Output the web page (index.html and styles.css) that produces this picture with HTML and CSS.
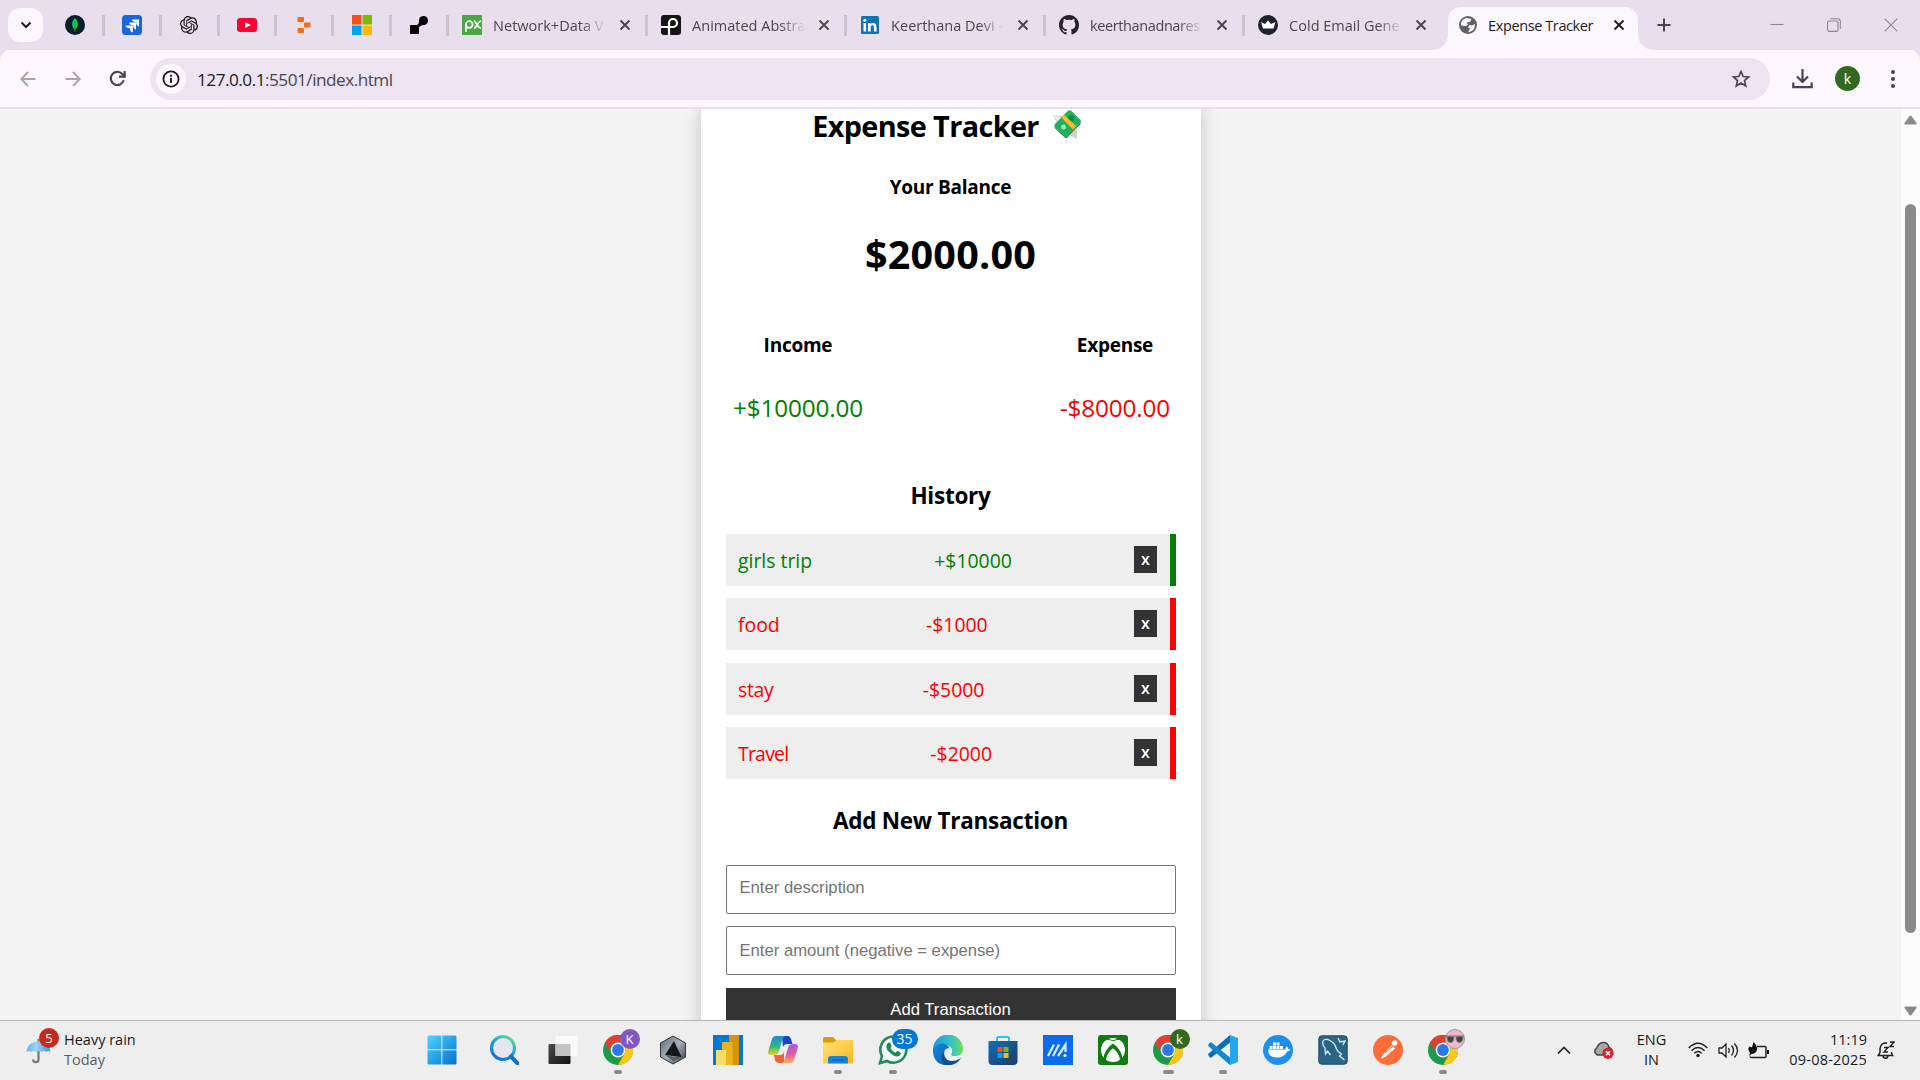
FILE: index.html
```html
<!DOCTYPE html>
<html lang="en">
<head>
<meta charset="utf-8">
<title>Expense Tracker</title>
<link rel="stylesheet" href="styles.css">
</head>
<body>
<svg class="defs" width="0" height="0" aria-hidden="true">
  <defs>
    <linearGradient id="win" x1="0" y1="0" x2="1" y2="1"><stop offset="0" stop-color="#50d6ff"/><stop offset="1" stop-color="#0070d0"/></linearGradient>
    <linearGradient id="lens" x1="0.8" y1="0" x2="0.2" y2="1"><stop offset="0" stop-color="#5fe08a"/><stop offset=".45" stop-color="#19a0d8"/><stop offset="1" stop-color="#0a6fd0"/></linearGradient>
    <linearGradient id="dark" x1="0" y1="0" x2="1" y2="1"><stop offset="0" stop-color="#4a4a48"/><stop offset="1" stop-color="#111"/></linearGradient>
    <linearGradient id="steel" x1="0" y1="0" x2="1" y2="1"><stop offset="0" stop-color="#5a6470"/><stop offset=".5" stop-color="#a9b3bd"/><stop offset="1" stop-color="#30363c"/></linearGradient>
    <linearGradient id="copA" x1="0" y1="0" x2="0" y2="1"><stop offset="0" stop-color="#1a8be0"/><stop offset=".55" stop-color="#2fb87c"/><stop offset="1" stop-color="#f2d21a"/></linearGradient>
    <linearGradient id="copB" x1="0" y1="0" x2="0" y2="1"><stop offset="0" stop-color="#a05be8"/><stop offset=".55" stop-color="#ea5b9c"/><stop offset="1" stop-color="#ffb05c"/></linearGradient>
    <linearGradient id="fold" x1="0" y1="0" x2="1" y2="1"><stop offset="0" stop-color="#ffe27a"/><stop offset="1" stop-color="#fcb81f"/></linearGradient>
    <linearGradient id="edgeA" x1="0" y1="0" x2="1" y2="0"><stop offset="0" stop-color="#1f98dc"/><stop offset=".6" stop-color="#35c1c8"/><stop offset="1" stop-color="#6ae24a"/></linearGradient>
    <linearGradient id="edgeB" x1="0" y1="0" x2="1" y2="1"><stop offset="0" stop-color="#1287dc"/><stop offset="1" stop-color="#0c57a6"/></linearGradient>
    <linearGradient id="store" x1="0" y1="0" x2="1" y2="1"><stop offset="0" stop-color="#0f6fb8"/><stop offset="1" stop-color="#203a66"/></linearGradient>
    <linearGradient id="umb" x1="0" y1="0" x2="1" y2="0"><stop offset="0" stop-color="#62b4f5"/><stop offset=".4" stop-color="#9fd3fb"/><stop offset="1" stop-color="#3c93ec"/></linearGradient>
    <symbol id="x" viewBox="0 0 12 12"><path d="M1.500 1.500l9 9M10.500 1.500l-9 9" stroke="currentColor" stroke-width="1.900" fill="none"/></symbol>
    <symbol id="chrome" viewBox="0 0 30 30">
      <circle cx="15" cy="15" r="15" fill="#1e9a48"/>
      <path d="M2 7.500A15 15 0 0 1 28 7.500H15A7.500 7.500 0 0 0 8.500 18.800z" fill="#e53d31"/>
      <path d="M28 7.500A15 15 0 0 1 15 30L21.500 18.700A7.500 7.500 0 0 0 15 7.500z" fill="#fdc713"/>
      <circle cx="15" cy="15" r="7.400" fill="#fff"/><circle cx="15" cy="15" r="5.900" fill="#2d77ee"/>
    </symbol>
  </defs>
</svg>

<header class="tabstrip">
  <div class="tab-search"><svg width="12" height="8" viewBox="0 0 12 8"><path d="M1.500 1.500L6 6l4.500-4.500" fill="none" stroke="#1d1b20" stroke-width="2"/></svg></div>

  <div class="pin"><svg width="20" height="20" viewBox="0 0 20 20"><circle cx="10" cy="10" r="10" fill="#041e2b"/><path d="M10 3C6.500 7 6 11 10 15C14 11 13.500 7 10 3z" fill="#13d65a"/><path d="M10 6v11" stroke="#0a8a3c" stroke-width="1"/></svg></div>
  <div class="pin"><svg width="20" height="20" viewBox="0 0 20 20"><rect width="20" height="20" rx="3.500" fill="#1868db"/><path d="M10 4.500h7v7q-2.800-.5-2.800-4.200-3.700 0-4.200-2.800zM7 7.500q3.500 0 7 0v7q-2.800-.5-2.800-4.200Q7.500 10.300 7 7.500zM3.500 10.500h7.300v7q-2.800-.5-2.800-4.200-4 0-4.500-2.800z" fill="#fff"/></svg></div>
  <div class="pin"><svg width="18" height="18" viewBox="0 0 24 24"><path fill="#111" d="M22.282 9.821a5.985 5.985 0 0 0-.516-4.910 6.046 6.046 0 0 0-6.510-2.900A6.065 6.065 0 0 0 4.981 4.180a5.985 5.985 0 0 0-3.998 2.900 6.046 6.046 0 0 0 .743 7.097 5.980 5.980 0 0 0 .511 4.911 6.051 6.051 0 0 0 6.515 2.900A5.985 5.985 0 0 0 13.260 24a6.056 6.056 0 0 0 5.772-4.206 5.990 5.990 0 0 0 3.998-2.900 6.056 6.056 0 0 0-.747-7.073zM13.260 22.430a4.476 4.476 0 0 1-2.876-1.041l.142-.080 4.778-2.758a.795.795 0 0 0 .393-.681v-6.737l2.020 1.169a.071.071 0 0 1 .038.052v5.583a4.504 4.504 0 0 1-4.495 4.494zM3.600 18.304a4.470 4.470 0 0 1-.535-3.014l.142.085 4.783 2.759a.771.771 0 0 0 .780 0l5.843-3.369v2.332a.080.080 0 0 1-.033.062L9.740 19.950a4.500 4.500 0 0 1-6.140-1.646zM2.340 7.896a4.485 4.485 0 0 1 2.366-1.973V11.600a.766.766 0 0 0 .388.677l5.815 3.355-2.020 1.168a.076.076 0 0 1-.071 0l-4.830-2.787A4.504 4.504 0 0 1 2.340 7.872zm16.597 3.855l-5.833-3.387L15.119 7.200a.076.076 0 0 1 .071 0l4.830 2.791a4.494 4.494 0 0 1-.676 8.105v-5.678a.790.790 0 0 0-.407-.667zm2.010-3.023l-.141-.085-4.774-2.782a.776.776 0 0 0-.785 0L9.409 9.230V6.897a.066.066 0 0 1 .028-.061l4.830-2.787a4.500 4.500 0 0 1 6.680 4.660zm-12.640 4.135l-2.020-1.164a.080.080 0 0 1-.038-.057V6.075a4.500 4.500 0 0 1 7.375-3.453l-.142.080L8.704 5.460a.795.795 0 0 0-.393.681zm1.097-2.365l2.602-1.500 2.607 1.500v2.999l-2.597 1.500-2.607-1.500z"/></svg></div>
  <div class="pin"><svg width="20" height="14" viewBox="0 0 20 14"><rect width="20" height="14" rx="3" fill="#ff0033"/><path d="M8 4l6 3-6 3z" fill="#fff"/></svg></div>
  <div class="pin"><svg width="14" height="16" viewBox="0 0 14 16"><g fill="#f76b15"><rect x="0.500" y="0" width="6.500" height="5" rx="1"/><rect x="7" y="5.500" width="6.500" height="5" rx="1"/><rect x="0.500" y="11" width="6.500" height="5" rx="1"/></g></svg></div>
  <div class="pin"><svg width="20" height="20" viewBox="0 0 20 20"><path d="M0 0h9.500v9.500H0z" fill="#f25022"/><path d="M10.500 0H20v9.500h-9.500z" fill="#7fba00"/><path d="M0 10.500h9.500V20H0z" fill="#00a4ef"/><path d="M10.500 10.500H20V20h-9.500z" fill="#ffb900"/></svg></div>
  <div class="pin"><svg width="18" height="18" viewBox="0 0 18 18"><path d="M0 9h9v9H0z"/><circle cx="13.500" cy="4.500" r="4.500"/><path d="M4 10C9 9 9 7 9.500 3L15 9c-4 0-5.500 1-7 4z"/></svg></div>

  <div class="tab"><svg width="20" height="20" viewBox="0 0 20 20"><path d="M0 0h20v20H0z" fill="#4ba847"/><g fill="none" stroke="#fff" stroke-width="1.700"><path d="M4 17V9.500"/><circle cx="7.300" cy="9.500" r="3.300"/><path d="M12 6c2 0 3 7 7 7M19 6c-3 0-4 7-7 7"/></g></svg><span class="title t1">Network+Data V</span><svg class="close"><use href="#x"/></svg></div>
  <div class="tab"><svg width="20" height="20" viewBox="0 0 20 20"><rect width="20" height="20" rx="3" fill="#151515"/><path d="M0 12h12a4 4 0 1 0-4-4v12" fill="none" stroke="#fff" stroke-width="2.200"/></svg><span class="title t2">Animated Abstra</span><svg class="close"><use href="#x"/></svg></div>
  <div class="tab"><svg width="20" height="18" viewBox="0 0 20 18"><rect x="1" width="18" height="18" rx="1.500" fill="#0a76b7"/><path d="M3.500 7h2.600v8.500H3.500zM8 7h2.500v1.200c1-2 6-2 6 2.300v5h-2.600v-4.600c0-2.300-3.200-2-3.200 0v4.600H8z" fill="#fff"/><circle cx="4.800" cy="4.200" r="1.500" fill="#fff"/></svg><span class="title t3">Keerthana Devi -</span><svg class="close"><use href="#x"/></svg></div>
  <div class="tab"><svg width="20" height="20" viewBox="0 0 16 16"><path fill="#24222c" d="M8 0C3.580 0 0 3.580 0 8c0 3.540 2.290 6.530 5.470 7.590.4.070.550-.170.550-.380 0-.190-.010-.820-.010-1.490-2.010.370-2.530-.490-2.690-.940-.090-.230-.480-.940-.820-1.130-.280-.150-.680-.520-.010-.530.630-.010 1.080.580 1.230.820.720 1.210 1.870.870 2.330.660.070-.520.280-.870.510-1.070-1.780-.2-3.640-.890-3.640-3.950 0-.870.310-1.590.820-2.150-.080-.2-.360-1.020.080-2.120 0 0 .670-.210 2.200.820.640-.180 1.320-.270 2-.270s1.360.090 2 .270c1.530-1.040 2.200-.820 2.200-.820.440 1.100.160 1.920.080 2.120.510.560.820 1.270.820 2.150 0 3.070-1.870 3.750-3.650 3.950.290.250.540.730.540 1.480 0 1.070-.010 1.930-.010 2.200 0 .210.150.460.550.380A8.010 8.010 0 0 0 16 8c0-4.420-3.580-8-8-8z"/></svg><span class="title t4">keerthanadnares</span><svg class="close"><use href="#x"/></svg></div>
  <div class="tab last"><svg width="20" height="20" viewBox="0 0 20 20"><circle cx="10" cy="10" r="10" fill="#22222c"/><path d="M3 7l4 2 3-3.500L13 9l4.500-2-2 6.500H5z" fill="#fff"/></svg><span class="title t5">Cold Email Gene</span><svg class="close"><use href="#x"/></svg></div>
  <div class="tab active"><svg width="18" height="18" viewBox="0 0 18 18"><circle cx="9" cy="9" r="9" fill="#5f6368"/><path d="M8 2C3.500 2.500 1.500 6 2 9.500l5 .5 2-1.500-1.500-2L11 6l1.500-3zM16 8l-3 1.500L10.500 9 9 11.500l2 1-2 3.700C13 16 16.300 13 16 8z" fill="#fdf7ff"/></svg><span class="title t6">Expense Tracker</span><svg class="close"><use href="#x"/></svg></div>
  <svg class="newtab" width="14" height="14" viewBox="0 0 14 14"><path d="M7 0.500v13M.5 7h13" stroke="#49454f" stroke-width="2"/></svg>
  <div class="win-controls">
    <svg width="14" height="14" viewBox="0 0 14 14"><path d="M.5 6.500h13"/></svg>
    <svg width="14" height="14" viewBox="0 0 14 14"><rect x=".6" y="3" width="10.400" height="10.400" rx="1.500"/><path d="M3.500.8H11A2.500 2.500 0 0 1 13.300 3.200V11"/></svg>
    <svg width="14" height="14" viewBox="0 0 14 14"><path d="M.7.7l12.600 12.600M13.300.7L.7 13.300"/></svg>
  </div>
</header>

<div class="toolbar">
  <svg class="nav dim" width="16" height="16" viewBox="0 0 16 16"><path d="M15.500 8H1.500M8 1L1.300 8 8 15"/></svg>
  <svg class="nav dim" width="16" height="16" viewBox="0 0 16 16"><path d="M.5 8h14M8 1l6.700 7L8 15"/></svg>
  <svg class="nav reload" width="17" height="17" viewBox="0 0 17 17"><path d="M14.700 10.200A6.600 6.600 0 1 1 13.300 4L15.500 6.200M15.700 1v5.700H10"/></svg>
  <div class="omnibox">
    <div class="site-info"><svg width="18" height="18" viewBox="0 0 18 18"><circle cx="9" cy="9" r="7.600" fill="none" stroke="#1d1b20" stroke-width="1.800"/><path d="M9 8v5M9 4.800v1.900" stroke="#1d1b20" stroke-width="1.900"/></svg></div>
    <span class="url"><b>127.0.0.1</b>:5501/index.html</span>
    <svg class="star" width="20" height="20" viewBox="0 0 20 20"><path d="M10 2.500l2.200 5 5.400.5-4.100 3.600 1.200 5.300L10 14.100l-4.700 2.800 1.200-5.300L2.400 8l5.400-.5z" fill="none" stroke="#49454f" stroke-width="1.700"/></svg>
  </div>
  <svg class="dl" width="21" height="21" viewBox="0 0 21 21"><path d="M10.500 1v12.500M5 8.500l5.500 5.500L16 8.500M1.300 14.500v4.700h18.400v-4.700" fill="none" stroke="#49405a" stroke-width="2.200"/></svg>
  <div class="avatar">k</div>
  <svg class="dots" width="6" height="20" viewBox="0 0 6 20"><g fill="#49405a"><circle cx="3" cy="3" r="2"/><circle cx="3" cy="10" r="2"/><circle cx="3" cy="17" r="2"/></g></svg>
</div>

<main class="viewport">
  <div class="page">
    <section class="card">
      <h2><span>Expense Tracker</span>
        <svg class="money" width="28" height="29" viewBox="0 0 28 29"><path d="M0 5l10 1-5 9zM16 23l8-9-.5 15z" fill="#d0d0d0"/><path d="M0 5l9 3-4 4z" fill="#ececec"/><path d="M1.500 14.500L15 .8q2-1.300 3.500.2L27 9.500q1.500 1.700 0 3.200L14.500 26q-1.500 1.300-3 0L1.500 16.500z" fill="#1fb25a"/><path d="M1.500 16.500l10 9.500q1.500 1.300 3 0L27 12.700l.8-1-.3 2.300L14.500 27.300q-1.500 1.200-3 0L1.700 18z" fill="#0d7a3a"/><path d="M17 25l7-8-.5 12z" fill="#d0d0d0"/><circle cx="18" cy="8.500" r="3.200" fill="#128a44"/><circle cx="10.500" cy="17" r="2.500" fill="#9be6b6"/><path d="M8.300 7.500L11 4.800 23 16l-3 3.500z" fill="#fcb928"/></svg>
      </h2>
      <h4 class="balance-label"><span>Your Balance</span></h4>
      <h1><span>$2000.00</span></h1>
      <div class="summary">
        <div class="sum"><h4><span>Income</span></h4><p class="plus"><span>+$10000.00</span></p></div>
        <div class="sum"><h4><span>Expense</span></h4><p class="minus"><span>-$8000.00</span></p></div>
      </div>
      <h3 class="history"><span>History</span></h3>
      <ul class="list">
        <li class="plus"><span>girls trip</span><span>+$10000</span><button>x</button></li>
        <li class="minus"><span>food</span><span>-$1000</span><button>x</button></li>
        <li class="minus"><span class="snug">stay</span><span>-$5000</span><button>x</button></li>
        <li class="minus"><span class="tight">Travel</span><span>-$2000</span><button>x</button></li>
      </ul>
      <h3 class="add"><span>Add New Transaction</span></h3>
      <form class="form">
        <input type="text" class="desc" placeholder="Enter description">
        <input type="text" placeholder="Enter amount (negative = expense)">
        <button type="button" class="submit">Add Transaction</button>
      </form>
    </section>
  </div>
  <div class="scrollbar">
    <svg width="13" height="10" viewBox="0 0 13 10"><path d="M5.500 1q1-1.200 2 0l5 7q.5 1.500-1 1.500h-10Q0 9.500.5 8z"/></svg>
    <div class="thumb"></div>
    <svg width="13" height="10" viewBox="0 0 13 10"><path d="M5.500 9q1 1.200 2 0l5-7q.5-1.500-1-1.500h-10Q0 .5.500 2z"/></svg>
  </div>
</main>

<footer class="taskbar">
  <div class="weather">
    <div class="umbrella">
      <svg width="25" height="26" viewBox="0 0 25 26"><path d="M12.500 1v3" stroke="#777" stroke-width="2"/><path d="M12.500 12v9.500a2.700 2.700 0 0 1-5.400 0" fill="none" stroke="#777" stroke-width="2.200"/><path d="M.5 14C1 7 6 3.500 12.500 3.500S24 7 24.500 14q-2-2-4 0-2.500-2-5 0-3-2-5.500 0-2.500-2-5 0-2.500-1.500-4.500 0z" fill="url(#umb)"/></svg>
      <span class="count">5</span>
    </div>
    <div class="wtext"><div class="wl1">Heavy rain</div><div class="wl2">Today</div></div>
  </div>
  <div class="apps">
    <div class="app s1"><svg width="30" height="30" viewBox="0 0 30 30"><path d="M.5 2Q.5 .5 2 .5h12.300v13.800H.5zM15.300.5H28q1.500 0 1.500 1.500v12.300H15.300zM.5 15.300h13.800v14.200H2q-1.500 0-1.500-1.500zM15.300 15.300h14.200V28q0 1.500-1.500 1.500H15.300z" fill="url(#win)"/></svg></div>
    <div class="app s2"><svg width="30" height="30" viewBox="0 0 30 30"><circle cx="14" cy="13" r="11.500" fill="#e3e6ea" stroke="url(#lens)" stroke-width="3"/><path d="M22 21.500l6.500 6.800" stroke="#0a6fd0" stroke-width="4" stroke-linecap="round"/></svg></div>
    <div class="app s3"><svg width="30" height="30" viewBox="0 0 30 30"><rect x=".5" y="9" width="22" height="20" rx="1" fill="url(#dark)"/><rect x="7.500" y="1" width="22" height="20" rx="1" fill="#fafafa"/><path d="M7.500 9h15v12h-15z" fill="#c2c2c2"/></svg></div>
    <div class="app run"><svg width="30" height="30"><use href="#chrome"/></svg><span class="badge purple">K</span></div>
    <div class="app"><svg width="30" height="30" viewBox="0 0 30 30"><path d="M15 1l12.500 7v14L15 29 2.500 22V8z" fill="url(#steel)" stroke="#30353a"/><path d="M16 6l7.500 16L7 20z" fill="#14171a"/><path d="M7 20l9 2 7.500 0L15 26z" fill="#555d66"/></svg></div>
    <div class="app"><svg width="30" height="30" viewBox="0 0 30 30"><path d="M0 0h30v30H0z" fill="#0078d4"/><path d="M16 0h10v30H16z" fill="#d6930e"/><path d="M9 7h10.500v23H9z" fill="#ecb41c"/><path d="M3 15h10v15H3z" fill="#f8dc6a"/></svg></div>
    <div class="app"><svg width="30" height="30" viewBox="0 0 30 30"><path d="M14 1h6q2 0 3 3l1.500 5H19q-3 0-4 3z" fill="#1a44c8"/><path d="M16 28h-6q-2 0-3-3l-1-5h6q3 0 4-3z" fill="#f0643c"/><path d="M8 1h9q-2 1-3 5l-3 10q-1 4-5 4H3q-4 0-2.500-5L4 4q1-3 4-3z" fill="url(#copA)"/><path d="M22 28h-8q2-1 3-5l3-10q1-4 5-4h2q4 0 2.500 5L26 25q-1 3-4 3z" fill="url(#copB)"/></svg></div>
    <div class="app run"><svg width="30" height="30" viewBox="0 0 30 30"><path d="M0 3.500Q0 2 1.500 2H10l3 3h15.500Q30 5 30 6.500V12H0z" fill="#d99b08"/><path d="M0 7.500h10.500L13.500 5h15Q30 5 30 6.500v21q0 1-1 1H1q-1 0-1-1z" fill="url(#fold)"/><path d="M5 28.500V24q0-3 3-3h14q3 0 3 3v4.500z" fill="#1784d8"/><path d="M9 25h12" stroke="#0b5a9c"/></svg></div>
    <div class="app run"><svg width="30" height="30" viewBox="0 0 30 30"><path d="M2 28l2-7A13 13 0 1 1 9 26z" fill="#f5f8f6" stroke="#1f8b5c" stroke-width="2.600"/><path d="M9.500 8.500q2-2 3 0l1 2.500q.3.800-1 2 1.500 3.500 5 4.700 1.500-2.200 2.300-1.700l2.700 1.500q1.200 1-.8 3-3 2.500-8-1.200-6.500-5-5.200-9z" fill="#1f8b5c"/></svg><span class="badge wide">35</span></div>
    <div class="app"><svg width="30" height="30" viewBox="0 0 30 30"><path d="M0 15A15 15 0 0 1 30 14c0 5-4 7-8.500 7-3 0-4-1.500-2.500-3.500C20 14 17 10 12 10 6 10 1 14 0 18z" fill="url(#edgeA)"/><path d="M0 16c1-6 7-8.500 12-7 3 1 4 3 4.500 4.500C10 12 9 22 16 26q5 3 11-2C21 34 0 33 0 16z" fill="url(#edgeB)"/><path d="M11 16c-2 5 2 10 8 10 4 0 7-2 9-3-3 5-8 7-13 7C7 29 7 20 11 16z" fill="#134f98"/></svg></div>
    <div class="app"><svg width="30" height="30" viewBox="0 0 30 30"><path d="M9 7V3.500Q9 2 10.500 2h9Q21 2 21 3.500V7" fill="none" stroke="#35c0f2" stroke-width="2"/><path d="M.5 6h29v20q0 4-4 4h-21q-4 0-4-4z" fill="url(#store)"/><path d="M9.500 12h5v5h-5z" fill="#f25022"/><path d="M15.500 12h5v5h-5z" fill="#7fba00"/><path d="M9.500 18h5v5h-5z" fill="#00a4ef"/><path d="M15.500 18h5v5h-5z" fill="#ffb900"/></svg></div>
    <div class="app"><svg width="30" height="30" viewBox="0 0 30 30"><path d="M0 0h30v30H0z" fill="#0a6ce8"/><g fill="none" stroke="#d5e7ff" stroke-width="2.300"><path d="M5 21L11 9.500M10 21l6-11.500M15 21L22.500 9.500V17"/></g><circle cx="22" cy="20.500" r="1.500" fill="#fff"/></svg></div>
    <div class="app"><svg width="30" height="30" viewBox="0 0 30 30"><rect width="30" height="30" rx="3" fill="#107c10"/><circle cx="15" cy="15" r="12" fill="#fff"/><path d="M15 8.500c4.500 3 9.500 9.500 9.300 15L22 25C21.500 20 18 15.500 15 13.300 12 15.500 8.500 20 8 25l-2.300-1.500C5.500 18 10.500 11.500 15 8.500zM7.500 5Q11 4 15 6.300 19 4 22.500 5L21 3.500Q18 4 15 5.300 12 4 9 3.500z" fill="#107c10"/></svg></div>
    <div class="app run wide-run"><svg width="30" height="30"><use href="#chrome"/></svg><span class="badge green">k</span></div>
    <div class="app run"><svg width="30" height="30" viewBox="0 0 30 30"><path d="M22 0l8 3v24l-8 3z" fill="#25a6ee"/><path d="M22 7.500L3.500 22.500Q2.500 23 1.500 22L.5 20.500q-.8-1 .2-2L22 0z" fill="#0a6fb8"/><path d="M22 22.500L3.500 7.500Q2.500 7 1.500 8L.5 9.500q-.8 1 .2 2L22 30z" fill="#1287d0"/></svg></div>
    <div class="app"><svg width="30" height="30" viewBox="0 0 30 30"><circle cx="15" cy="15" r="15" fill="#1d8ff0"/><path d="M5 14.500h17.500q0-2.500 1-3.500 1.500 1 1.500 3 1.500-.3 2.500.3-1 2.200-3.500 2.200-2.500 6-10 6-9 0-9-8z" fill="#fff"/><g fill="#fff"><path d="M6.500 11h3v3h-3zM10 11h3v3h-3zM13.500 11h3v3h-3zM17 11h3v3h-3zM10 7.500h3v3h-3zM13.500 7.500h3v3h-3z"/></g></svg></div>
    <div class="app"><svg width="30" height="30" viewBox="0 0 30 30"><rect x=".8" y=".8" width="28.400" height="28.400" rx="3" fill="#2a6587" stroke="#1c4a66"/><path d="M5 6q2-3 7-.5 5 2.500 6.500 8.500 1 3 5 5l-2 2 5 4M5 6q-1 4 2 7l.5 6 2-3 3 4M20 3l2 4 5-1-2 4" fill="none" stroke="#dcecf5" stroke-width="1.300"/></svg></div>
    <div class="app"><svg width="30" height="30" viewBox="0 0 30 30"><circle cx="15" cy="15" r="15" fill="#ff6c37"/><circle cx="21.500" cy="8" r="2.800" fill="#fff"/><path d="M19 10l3 3.500-9 8-5.500 2.500 3-5z" fill="#fff"/><path d="M12 18l8-7" stroke="#ff6c37"/></svg></div>
    <div class="app run"><svg width="30" height="30"><use href="#chrome"/></svg><span class="badge pink"><svg width="18" height="10" viewBox="0 0 18 10"><path d="M0 1h18M1 1.500h7q0 6-3.500 6T1 1.500zM10 1.500h7q0 6-3.500 6t-3.500-6z" fill="#444" stroke="#777"/></svg></span></div>
  </div>
  <div class="tray">
    <svg class="chev" width="14" height="9" viewBox="0 0 14 9"><path d="M1 7.500l6-6 6 6" fill="none" stroke="#222" stroke-width="1.700"/></svg>
    <svg class="cloud" width="21" height="18" viewBox="0 0 21 18"><path d="M4.500 14a4 4 0 0 1-.8-7.200Q6 1.500 10.500 1.500T16 6.500q3 1 3 4t-4 3.500z" fill="#a8a8a8" stroke="#444" stroke-width="1.500"/><circle cx="15" cy="12.300" r="5.700" fill="#d9242f"/><path d="M13 10.300l4 4M17 10.300l-4 4" stroke="#fff" stroke-width="1.500"/></svg>
    <div class="lang"><span>ENG</span><span>IN</span></div>
    <svg class="wifi" width="20" height="16" viewBox="0 0 20 16"><g fill="none" stroke="#222" stroke-width="1.400"><path d="M.7 6Q10-3.500 19.300 6M3.500 8.700q6.500-6.500 13 0M6.300 11.300q3.700-3.500 7.400 0"/></g><circle cx="10" cy="13.500" r="1.800" fill="#222"/></svg>
    <svg class="vol" width="21" height="17" viewBox="0 0 21 17"><g fill="none" stroke="#222" stroke-width="1.300"><path d="M1 6v5h3l4 4V2L4 6zM10.500 6q1.500 2.500 0 5M13.500 3.500q4 5 0 10M16.500 1.500q6 7 0 14"/></g></svg>
    <svg class="batt" width="21" height="17" viewBox="0 0 21 17"><path d="M9 4.500h8q1 0 1 1v9q0 1-1 1H4q-1.500 0-2-1" fill="none" stroke="#222" stroke-width="1.500"/><path d="M19 8h2v4h-2zM5.500 0q4.500 4 3.500 8-1.500 4-5.500 4L1 14l1-3Q-1 7 1.500 4.500L4 5.500z" fill="#111"/></svg>
    <div class="clock"><div>11:19</div><div class="date">09-08-2025</div></div>
    <svg class="bell" width="18" height="18" viewBox="0 0 18 18"><path d="M10 2Q3.500 1.500 3 8v3.500L1.200 14.500h14.500L14.500 12V11M6 15q.5 2.300 2.500 2.300T11 15" fill="none" stroke="#222" stroke-width="1.500"/><path d="M7 6.500h4L7 11h4M13 1h4l-4 4.500h4" fill="none" stroke="#222" stroke-width="1.400"/></svg>
  </div>
</footer>
</body>
</html>
```
FILE: styles.css
```css
* { box-sizing: border-box; }
body {
  margin: 0;
  width: 1920px;
  height: 1080px;
  overflow: hidden;
  display: flex;
  flex-direction: column;
  font-family: "Open Sans", "Noto Sans", sans-serif;
  color: #000;
  background: #e9deee;
}
svg { display: block; flex: none; }
.defs { position: absolute; }
h1, h2, h3, h4, p, ul { margin: 0; padding: 0; }

/* Tab strip */
.tabstrip { height: 50px; flex: none; display: flex; align-items: center; background: #e9deee; }
.tab-search {
  width: 35px; height: 34px; margin: 0 4.600px 0 8px; border-radius: 12px; background: #fdf7ff;
  display: flex; align-items: center; justify-content: center; flex: none;
}
.pin { width: 57.360px; height: 21px; display: flex; align-items: center; justify-content: center; border-right: 3px solid #cbc4cd; flex: none; }
.tab { width: 199px; height: 21px; padding-left: 13px; display: flex; align-items: center; border-right: 3px solid #cbc4cd; flex: none; color: #49454f; }
.tab.last { border-right: 0; width: 203px; }
.title {
  width: 113px; height: 24px; padding-top: 2px; margin-left: 11px; white-space: nowrap; font-size: 14.500px; line-height: 22px;
  -webkit-mask-image: linear-gradient(to right, #000 78%, transparent 100%);
  mask-image: linear-gradient(to right, #000 78%, transparent 100%);
}
.t4 { letter-spacing: -.4px; }
.t6 { letter-spacing: -.4px; }
.close { width: 12px; height: 12px; margin-left: 13px; flex: none; }
.tab.active {
  position: relative; align-self: flex-end; width: 190px; height: 43px; padding: 0 0 7px 11px; border: 0;
  border-radius: 13px 13px 0 0; background: #fdf7ff; color: #1d1b20;
}
.tab.active::before, .tab.active::after { content: ""; position: absolute; bottom: 0; width: 15px; height: 15px; }
.tab.active::before { left: -15px; background: radial-gradient(circle at 0 0, transparent 14.500px, #fdf7ff 15px); }
.tab.active::after { right: -15px; background: radial-gradient(circle at 100% 0, transparent 14.500px, #fdf7ff 15px); }
.active .title { -webkit-mask-image: none; mask-image: none; width: 114px; }
.active .close { margin-left: 11px; }
.newtab { margin-left: 19px; }
.win-controls { display: flex; gap: 43px; margin: 0 22px 0 auto; }
.win-controls svg { fill: none; stroke: #8d8791; stroke-width: 1.100; }

/* Toolbar */
.toolbar { height: 59px; flex: none; display: flex; align-items: center; background: #fdf7ff; border-bottom: 2px solid #e7e0eb; border-radius: 10px 10px 0 0; padding-left: 20px; }
.nav { fill: none; stroke: #49405a; stroke-width: 2.200; margin-right: 28.500px; }
.nav.dim { stroke: #aaa3ae; stroke-width: 1.900; }
.nav.reload { margin-right: 24px; }
.omnibox { width: 1620px; height: 42px; margin-top: 1px; border-radius: 21px; background: #ece5f1; display: flex; align-items: center; padding: 0 19px 0 6px; }
.site-info { width: 30px; height: 30px; border-radius: 50%; background: #fdf7ff; display: flex; align-items: center; justify-content: center; }
.url { margin-left: 11px; font-size: 17.200px; letter-spacing: -.5px; color: #49454f; }
.url b { font-weight: 400; color: #1d1b20; }
.star { margin-left: auto; }
.dl { margin-left: 22px; }
.avatar { width: 25px; height: 25px; margin-left: 22px; border-radius: 50%; background: #33691e; color: #fff; font-size: 14px; line-height: 25px; text-align: center; }
.dots { margin-left: 29.500px; }

/* Page */
.viewport { height: 911px; flex: none; display: flex; overflow: hidden; background: #f4f4f4; }
.page { flex: 1; display: flex; justify-content: center; }
.card { width: 500px; height: 960px; flex: none; padding: 0 25px; background: #fff; box-shadow: 0 0 18px rgba(0, 0, 0, .2); }
.card h2, .card h1, .card h3, .card h4 { text-align: center; }
h2 { display: flex; justify-content: center; align-items: center; gap: 14px; height: 33px; line-height: 33px; font-size: 28.800px; letter-spacing: -.6px; }
.money { margin: -2px 8px 0 0; }
h4 { height: 28px; line-height: 28px; font-size: 19px; letter-spacing: -.25px; }
.balance-label { margin-top: 31px; }
h1 { margin-top: 25.500px; height: 54px; line-height: 54px; font-size: 39.500px; letter-spacing: .2px; }
.summary { display: flex; justify-content: space-between; margin-top: 50.500px; padding: 0 5.500px 0 7.500px; }
.sum p { margin-top: 32px; height: 34px; line-height: 34px; font-size: 24.300px; letter-spacing: -.15px; }
.plus { color: green; }
.minus { color: red; }
h3 { height: 32px; line-height: 32px; font-size: 22.500px; letter-spacing: -.25px; }
.history { margin-top: 55px; }
.list { list-style: none; display: flex; flex-direction: column; gap: 12.400px; margin-top: 22px; }
.list li { height: 52px; display: flex; justify-content: space-between; align-items: center; padding: 0 12.500px; background: #eee; border-right: 6px solid green; font-size: 19.400px; line-height: 28px; }
.list li.minus { border-color: red; }
.list span { padding-top: 2px; }
.snug { letter-spacing: -.35px; }
.tight { letter-spacing: -.75px; }
.list button { width: 23px; height: 27px; margin-bottom: 1px; padding: 0; border: 0; background: #333; color: #fff; font: 600 16px/25px "Open Sans", sans-serif; }
.add { margin-top: 25.800px; }
.form { display: flex; flex-direction: column; gap: 12.400px; margin-top: 28px; }
.form input { height: 49px; padding: 0 13px; border: 1px solid #767676; border-radius: 2px; font: 16.670px "Liberation Sans", Arial, sans-serif; }
.form .desc { padding-bottom: 2px; }
.form input::placeholder { color: #757575; }
.submit { height: 44px; border: 0; background: #333; color: #fff; font: 16.670px "Liberation Sans", Arial, sans-serif; }
.scrollbar { width: 19px; background: #fcfcfc; display: flex; flex-direction: column; align-items: center; padding: 6px 0 4px; }
.scrollbar svg { fill: #8b8b8b; }
.thumb { width: 11px; height: 729px; margin: 79px 0 auto; border-radius: 6px; background: #8b8b8b; }

/* Taskbar */
.taskbar { height: 60px; flex: none; display: flex; background: #eee; border-top: 1px solid #b9b9b9; }
.weather { display: flex; width: 413.500px; padding-left: 26px; }
.umbrella { position: relative; width: 38px; padding-top: 17px; }
.count { position: absolute; left: 13px; top: 7px; width: 20px; height: 20px; border-radius: 50%; background: #c42b1c; color: #fff; font-size: 13px; line-height: 20px; text-align: center; }
.wtext { padding-top: 9px; font-size: 14.500px; line-height: 20px; color: #1b1b1b; }
.wl2 { color: #5d5d5d; }
.apps { display: flex; }
.app { position: relative; width: 55px; display: flex; justify-content: center; padding-top: 14px; }
.app.s1 { width: 57px; }
.app.s2 { width: 66px; }
.app.s3 { width: 52px; margin-right: 2px; }
.app.run::after { content: ""; position: absolute; bottom: 6px; left: calc(50% - 4px); width: 8px; height: 4px; border-radius: 2px; background: #8a8a8a; }
.app.wide-run::after { left: calc(50% - 5.500px); width: 11px; }
.badge { position: absolute; left: 29px; top: 8px; width: 20px; height: 20px; border-radius: 50%; color: #fff; font-size: 13px; line-height: 20px; text-align: center; }
.badge.purple { background: #7e57c2; }
.badge.green { background: #33691e; }
.badge.wide { width: 26px; left: 26px; border-radius: 10px; background: #0078d4; font-size: 14px; }
.badge.pink { background: #f2b5cf; border: 1px solid #999; padding-top: 5px; }
.tray { display: flex; margin-left: auto; align-items: center; padding: 0 25px 1px 0; color: #1b1b1b; font-size: 14.500px; line-height: 20px; }
.cloud { margin-left: 22px; }
.lang { display: flex; flex-direction: column; align-items: center; width: 30px; margin-left: 23px; }
.wifi { margin-left: 21.500px; }
.vol { margin-left: 10px; }
.batt { margin-left: 9px; }
.clock { width: 80px; margin-left: 18px; text-align: right; white-space: nowrap; }
.date { letter-spacing: .2px; }
.bell { margin-left: 10px; }
```
